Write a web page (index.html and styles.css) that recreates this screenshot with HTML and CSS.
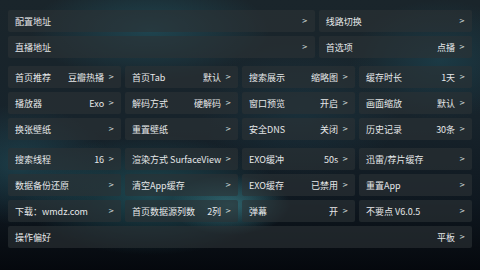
FILE: index.html
```html
<!DOCTYPE html>
<html lang="zh">
<head>
<meta charset="utf-8">
<link rel="stylesheet" href="styles.css">
</head>
<body>
<div class="page">
  <div class="group top">
    <div class="card"><span class="label">配置地址</span><span class="value"><i class="chev">&gt;</i></span></div>
    <div class="card"><span class="label">线路切换</span><span class="value"><i class="chev">&gt;</i></span></div>
    <div class="card"><span class="label">直播地址</span><span class="value"><i class="chev">&gt;</i></span></div>
    <div class="card"><span class="label">首选项</span><span class="value">点播<i class="chev">&gt;</i></span></div>
  </div>
  <div class="group grid4">
    <div class="card"><span class="label">首页推荐</span><span class="value">豆瓣热播<i class="chev">&gt;</i></span></div>
    <div class="card"><span class="label">首页Tab</span><span class="value">默认<i class="chev">&gt;</i></span></div>
    <div class="card"><span class="label">搜索展示</span><span class="value">缩略图<i class="chev">&gt;</i></span></div>
    <div class="card"><span class="label">缓存时长</span><span class="value">1天<i class="chev">&gt;</i></span></div>
    <div class="card"><span class="label">播放器</span><span class="value">Exo<i class="chev">&gt;</i></span></div>
    <div class="card"><span class="label">解码方式</span><span class="value">硬解码<i class="chev">&gt;</i></span></div>
    <div class="card"><span class="label">窗口预览</span><span class="value">开启<i class="chev">&gt;</i></span></div>
    <div class="card"><span class="label">画面缩放</span><span class="value">默认<i class="chev">&gt;</i></span></div>
    <div class="card"><span class="label">换张壁纸</span><span class="value"><i class="chev">&gt;</i></span></div>
    <div class="card"><span class="label">重置壁纸</span><span class="value"><i class="chev">&gt;</i></span></div>
    <div class="card"><span class="label">安全DNS</span><span class="value">关闭<i class="chev">&gt;</i></span></div>
    <div class="card"><span class="label">历史记录</span><span class="value">30条<i class="chev">&gt;</i></span></div>
  </div>
  <div class="group grid4">
    <div class="card"><span class="label">搜索线程</span><span class="value">16<i class="chev">&gt;</i></span></div>
    <div class="card"><span class="label">渲染方式 SurfaceView</span><span class="value"><i class="chev">&gt;</i></span></div>
    <div class="card"><span class="label">EXO缓冲</span><span class="value">50s<i class="chev">&gt;</i></span></div>
    <div class="card"><span class="label">迅雷/荐片缓存</span><span class="value"><i class="chev">&gt;</i></span></div>
    <div class="card"><span class="label">数据备份还原</span><span class="value"><i class="chev">&gt;</i></span></div>
    <div class="card"><span class="label">清空App缓存</span><span class="value"><i class="chev">&gt;</i></span></div>
    <div class="card"><span class="label">EXO缓存</span><span class="value">已禁用<i class="chev">&gt;</i></span></div>
    <div class="card"><span class="label">重置App</span><span class="value"><i class="chev">&gt;</i></span></div>
    <div class="card"><span class="label">下载：wmdz.com</span><span class="value"><i class="chev">&gt;</i></span></div>
    <div class="card"><span class="label">首页数据源列数</span><span class="value">2列<i class="chev">&gt;</i></span></div>
    <div class="card"><span class="label">弹幕</span><span class="value">开<i class="chev">&gt;</i></span></div>
    <div class="card"><span class="label">不要点 V6.0.5</span><span class="value"><i class="chev">&gt;</i></span></div>
    <div class="card full"><span class="label">操作偏好</span><span class="value">平板<i class="chev">&gt;</i></span></div>
  </div>
</div>
</body>
</html>
```

FILE: styles.css
```css
html, body {
  margin: 0;
  padding: 0;
  width: 480px;
  height: 270px;
  overflow: hidden;
}
body {
  font-family: "Noto Sans CJK SC", "Noto Sans", sans-serif;
  color: #e6e8e9;
  background:
    radial-gradient(ellipse 60px 30px at 230px 205px, rgba(70,150,160,0.55), rgba(70,150,160,0) 100%),
    radial-gradient(ellipse 130px 60px at 150px 195px, rgba(40,110,120,0.55), rgba(40,110,120,0) 100%),
    radial-gradient(ellipse 90px 60px at 20px 165px, rgba(40,100,115,0.45), rgba(40,100,115,0) 100%),
    radial-gradient(ellipse 120px 50px at 150px 30px, rgba(35,95,110,0.55), rgba(35,95,110,0) 100%),
    radial-gradient(ellipse 90px 60px at 440px 60px, rgba(30,80,95,0.5), rgba(30,80,95,0) 100%),
    radial-gradient(ellipse 100px 70px at 300px 110px, rgba(30,70,85,0.35), rgba(30,70,85,0) 100%),
    linear-gradient(180deg, #1a252b 0%, #17232b 45%, #0f1820 75%, #05080d 100%);
}
.page {
  padding: 10px 8px;
  display: flex;
  flex-direction: column;
  gap: 8px;
}
.group {
  display: grid;
  gap: 4px;
  grid-auto-rows: 22px;
}
.top {
  grid-template-columns: 2fr 1fr;
}
.grid4 {
  grid-template-columns: repeat(4, 1fr);
}
.card {
  background: rgba(44, 50, 54, 0.62);
  border-radius: 2px;
  display: flex;
  align-items: center;
  justify-content: space-between;
  padding: 0 7px;
  font-size: 9px;
  line-height: 1;
  white-space: nowrap;
  overflow: hidden;
}
.card.full {
  grid-column: 1 / -1;
}
.value {
  display: flex;
  align-items: center;
}
.chev {
  font-style: normal;
  font-family: "DejaVu Sans", sans-serif;
  font-size: 7px;
  margin-left: 4px;
  color: #dfe2e3;
}
```
